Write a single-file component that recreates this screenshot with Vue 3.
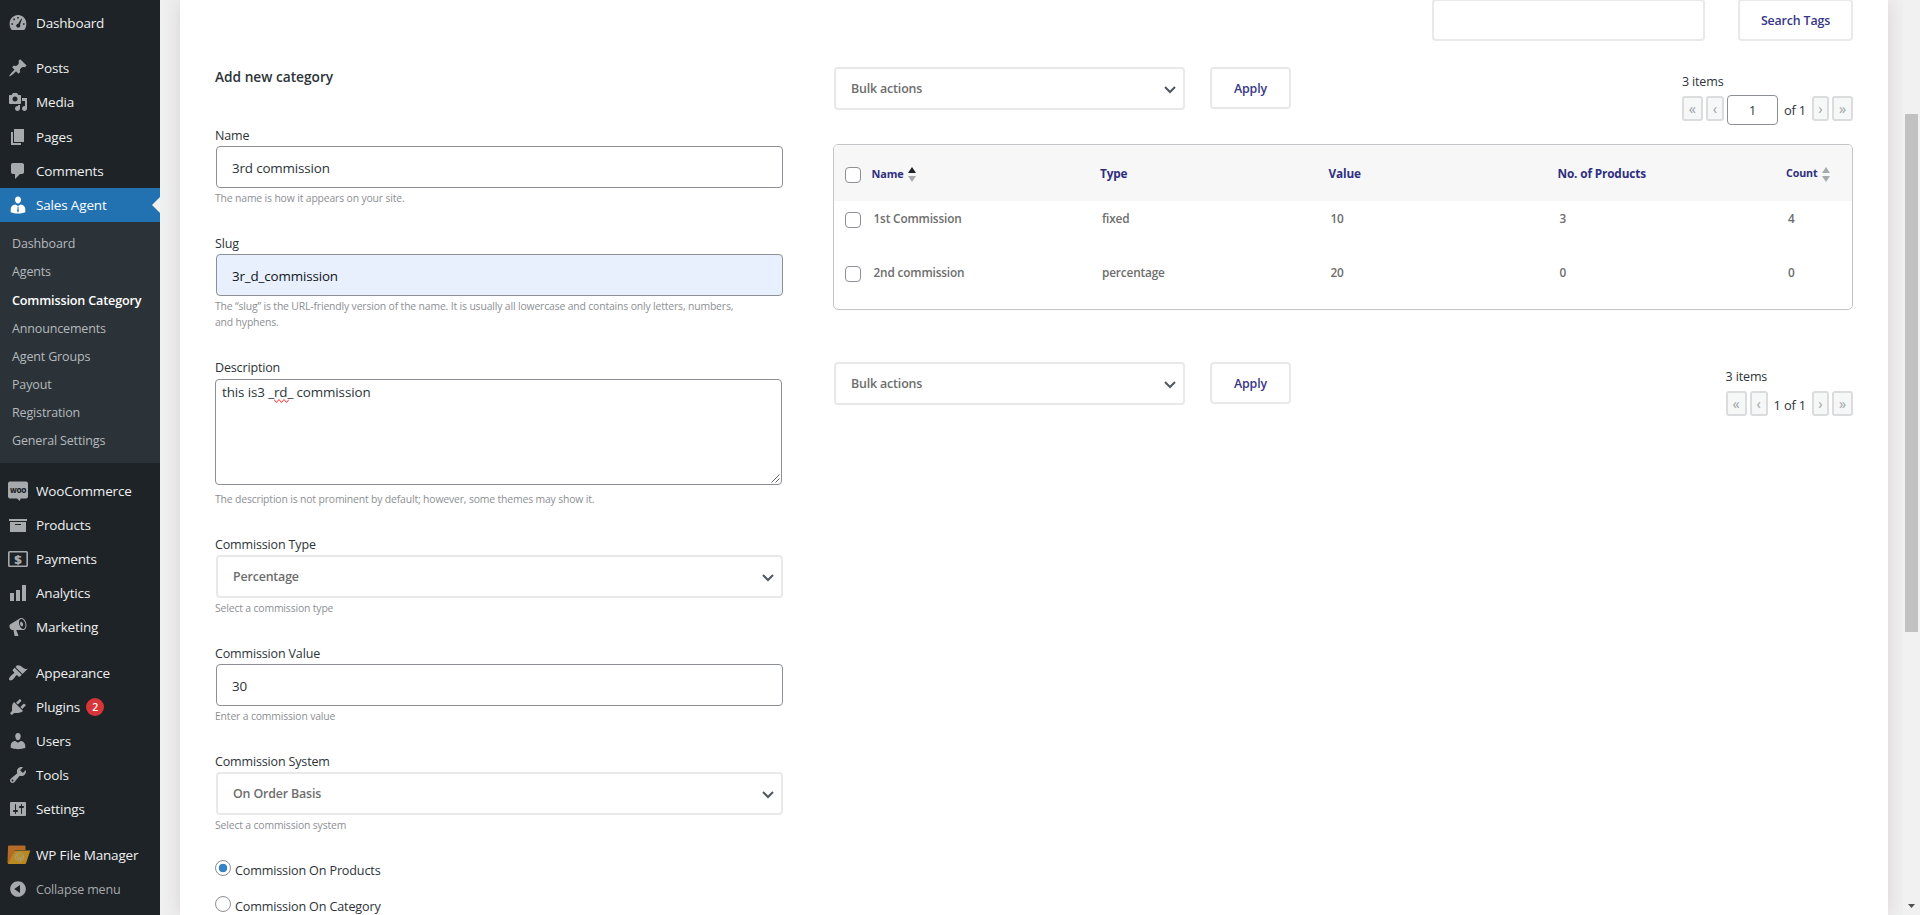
<script setup>
const paths = {
  dashboard: 'M3.76 17h12.48c1.34-1.63 2.14-3.71 2.14-6 0-5.3-3.75-9-8.38-9s-8.38 3.7-8.38 9c0 2.29.8 4.37 2.14 6zM9.200 4h1.600v1.600H9.200zM5.300 5.600h1.600v1.600H5.300zM13.300 5.600l.7.400-2 5.700c.4.800.3 1.700-.2 2.300-.8.800-2.200.800-3 .1s-.8-2 .1-2.800c.4-.4.9-.5 1.300-.5zM3.400 10.200H5v1.600H3.400zM15 10.200h1.600v1.600H15z',
  post: 'M10.44 3.02l1.82-1.82 6.36 6.35-1.83 1.82c-1.05-.68-2.48-.57-3.41.36l-.75.75c-.92.93-1.04 2.35-.35 3.41l-1.83 1.82-2.41-2.41-2.8 2.79c-.42.42-3.38 2.71-3.8 2.29s1.86-3.39 2.28-3.81l2.79-2.79L4.1 9.36l1.83-1.82c1.05.69 2.48.57 3.4-.36l.75-.75c.93-.92 1.05-2.35.36-3.41z',
  media: 'M13 11V4c0-.55-.45-1-1-1h-1.67L9 1H5L3.67 3H2c-.55 0-1 .45-1 1v7c0 .55.45 1 1 1h10c.55 0 1-.45 1-1zM7 4.5c1.38 0 2.5 1.12 2.5 2.5S8.38 9.5 7 9.5 4.5 8.38 4.5 7 5.62 4.5 7 4.5zM14 6h5v10.5c0 1.38-1.12 2.5-2.5 2.5S14 17.88 14 16.5s1.12-2.5 2.5-2.5c.17 0 .34.02.5.05V9h-3V6zm-4 8.05V13h2v3.5c0 1.38-1.12 2.5-2.5 2.5S7 17.88 7 16.5 8.12 14 9.5 14c.17 0 .34.02.5.05z',
  page: 'M6 15V2h10v13H6zm-1 1h8v2H3V5h2v11z',
  comment: 'M5 2h9c1.1 0 2 .9 2 2v7c0 1.1-.9 2-2 2h-2l-5 5v-5H5c-1.1 0-2-.9-2-2V4c0-1.1.9-2 2-2z',
  agent: 'M10 1.500c1.900 0 3 1.400 3 3.300S11.700 8.600 10 8.600 7 6.700 7 4.800s1.100-3.300 3-3.300zM7.200 9.500L10 11l2.800-1.500c2.600.4 4.500 2.200 4.500 4.800v2.900c-2.200.8-4.700 1.300-7.300 1.300s-5.100-.5-7.300-1.300v-2.900c0-2.600 1.900-4.400 4.500-4.800zM9.200 11.800l.4 1-.5 3.200.9 1.500.9-1.500-.5-3.200.4-1z',
  archive: 'M19 4v2H1V4h18zM2 7h16v10H2V7zm11 3V9H7v1h6z',
  chart: 'M18 18V2h-4v16h4zm-6 0V7H8v11h4zm-6 0v-8H2v8h4z',
  megaphone: 'M18.15 5.94c.46 1.62.38 3.22-.02 4.48-.42 1.28-1.26 2.18-2.3 2.48-.16.06-.26.06-.4.06-.06.02-.12.02-.18.02-.06.02-.14.02-.22.02h-6.8l2.22 5.5c.02.14-.06.26-.14.34-.08.1-.24.16-.34.16H6.95c-.1 0-.26-.06-.34-.16-.08-.08-.16-.2-.14-.34l-1-5.5H4.25l-.02-.02c-.5.06-1.08-.18-1.54-.62s-.88-1.08-1.06-1.88c-.24-.8-.2-1.56-.02-2.2.18-.62.58-1.08 1.06-1.3l.02-.02 9-5.4c.1-.06.18-.1.24-.16.06-.04.14-.08.24-.12.16-.08.28-.12.5-.18 1.04-.3 2.24.1 3.22.98s1.84 2.24 2.26 3.86zm-2.58 5.98h-.02c.4-.1.74-.34 1.04-.7.58-.7.86-1.76.86-3.04 0-.64-.1-1.3-.28-1.98-.34-1.36-1.02-2.5-1.78-3.24s-1.68-1.1-2.46-.88c-.82.22-1.4.96-1.7 2-.32 1.04-.28 2.36.06 3.72.38 1.36 1 2.5 1.8 3.24.78.74 1.62 1.1 2.48.88zm-2.54-7.08c.22-.04.42-.02.62.04.38.16.76.48 1.02 1s.42 1.2.42 1.78c0 .3-.04.56-.12.8-.18.48-.44.84-.86.94-.34.1-.8-.06-1.14-.4s-.64-.86-.78-1.5c-.18-.62-.12-1.24.02-1.72s.48-.84.82-.94z',
  brush: 'M14.48 11.06L7.41 3.99l1.5-1.5c.5-.56 2.3-.47 3.51.32 1.21.8 1.43 1.28 2.91 2.1 1.18.64 2.45 1.26 4.45.85zm-.71.71L6.7 4.7 4.93 6.47c-.39.39-.39 1.02 0 1.41l1.06 1.06c.39.39.39 1.03 0 1.42-.6.6-1.43 1.11-2.21 1.69-.35.26-.7.53-1.01.84C1.43 14.23.4 16.08 1.4 17.07c.99 1 2.84-.03 4.18-1.36.31-.31.58-.66.85-1.02.57-.78 1.08-1.61 1.69-2.21.39-.39 1.02-.39 1.41 0l1.06 1.06c.39.39 1.02.39 1.41 0z',
  plug: 'M13.11 4.36L9.87 7.6 8 5.73l3.24-3.24c.35-.34 1.05-.2 1.56.32.52.51.66 1.21.31 1.55zm-8 1.77l.91-1.12 9.01 9.01-1.19.84c-.71.71-2.63 1.16-3.82 1.16H6.14L4.9 17.26c-.59.59-1.54.59-2.12 0-.59-.58-.59-1.53 0-2.12l1.24-1.24v-3.88c0-1.13.4-3.19 1.09-3.89zm7.26 3.97l3.24-3.24c.34-.35 1.04-.21 1.55.31.52.51.66 1.21.31 1.55l-3.24 3.25z',
  user: 'M10 9.25c-2.27 0-2.73-3.44-2.73-3.44C7 4.02 7.82 2 9.97 2c2.16 0 2.98 2.02 2.71 3.81 0 0-.41 3.44-2.68 3.44zm0 2.57L12.72 10c2.39 0 4.52 2.33 4.52 4.53v2.49s-3.65 1.13-7.24 1.13c-3.65 0-7.24-1.13-7.24-1.13v-2.49c0-2.25 1.94-4.48 4.47-4.48z',
  wrench: 'M16.68 9.77c-1.34 1.34-3.3 1.67-4.95.99l-5.41 6.52c-.99.99-2.59.99-3.58 0s-.99-2.59 0-3.57l6.52-5.42c-.68-1.65-.35-3.61.99-4.95 1.28-1.28 3.12-1.62 4.72-1.06l-2.89 2.89 2.82 2.82 2.86-2.87c.53 1.58.18 3.39-1.08 4.65zM3.81 16.21c.4.39 1.04.39 1.43 0 .4-.4.4-1.04 0-1.43-.39-.4-1.03-.4-1.43 0-.39.39-.39 1.03 0 1.43z',
  sliders: 'M18 16V4c0-.55-.45-1-1-1H3c-.55 0-1 .45-1 1v12c0 .55.45 1 1 1h14c.55 0 1-.45 1-1zM8 11h1c.55 0 1 .45 1 1s-.45 1-1 1H8v1.500c0 .28-.22.5-.5.5s-.5-.22-.5-.5V13H6c-.55 0-1-.45-1-1s.45-1 1-1h1V5.500c0-.28.22-.5.5-.5s.5.22.5.5V11zm5-2h-1c-.55 0-1-.45-1-1s.45-1 1-1h1V5.500c0-.28.22-.5.5-.5s.5.22.5.5V7h1c.55 0 1 .45 1 1s-.45 1-1 1h-1v5.500c0 .28-.22.5-.5.5s-.5-.22-.5-.5V9z',
  collapse: 'M10 2.160c4.330 0 7.840 3.510 7.840 7.840s-3.510 7.840-7.840 7.840S2.160 14.330 2.160 10 5.710 2.160 10 2.160zm2 11.720V6.120L6.180 9.970z',
}

const groups = [
  { id: 'home', items: [{ label: 'Dashboard', icon: 'dashboard' }] },
  {
    id: 'content',
    items: [
      { label: 'Posts', icon: 'post' },
      { label: 'Media', icon: 'media' },
      { label: 'Pages', icon: 'page' },
      { label: 'Comments', icon: 'comment' },
      {
        label: 'Sales Agent',
        icon: 'agent',
        active: true,
        children: ['Dashboard', 'Agents', 'Commission Category', 'Announcements', 'Agent Groups', 'Payout', 'Registration', 'General Settings'],
      },
    ],
  },
  {
    id: 'shop',
    items: [
      { label: 'WooCommerce', icon: 'woo' },
      { label: 'Products', icon: 'archive' },
      { label: 'Payments', icon: 'money' },
      { label: 'Analytics', icon: 'chart' },
      { label: 'Marketing', icon: 'megaphone' },
    ],
  },
  {
    id: 'admin',
    items: [
      { label: 'Appearance', icon: 'brush' },
      { label: 'Plugins', icon: 'plug', badge: 2 },
      { label: 'Users', icon: 'user' },
      { label: 'Tools', icon: 'wrench' },
      { label: 'Settings', icon: 'sliders' },
    ],
  },
  {
    id: 'extra',
    items: [
      { label: 'WP File Manager', icon: 'files' },
      { label: 'Collapse menu', icon: 'collapse', muted: true },
    ],
  },
]

const rows = [
  { name: '1st Commission', type: 'fixed', value: 10, products: 3, count: 4 },
  { name: '2nd commission', type: 'percentage', value: 20, products: 0, count: 0 },
]
</script>

<template>
  <div class="page">
    <nav class="sidebar">
      <div v-for="g in groups" :key="g.id" :class="['group', g.id]">
        <template v-for="item in g.items" :key="item.label">
          <a :class="['item', { active: item.active, muted: item.muted }]">
            <svg v-if="item.icon === 'woo'" class="icon" viewBox="0 0 20 20">
              <path d="M2 .5h16a2 2 0 0 1 2 2v13a2 2 0 0 1-2 2h-5.500l-.7 2.500-2.800-2.500H2a2 2 0 0 1-2-2v-13a2 2 0 0 1 2-2z" />
              <text class="woo" x="10" y="11.600" text-anchor="middle">WOO</text>
            </svg>
            <svg v-else-if="item.icon === 'money'" class="icon" viewBox="0 0 20 20">
              <rect class="line" x=".8" y="2.800" width="18.400" height="14.400" rx=".8" />
              <text class="dollar" x="10" y="14.500" text-anchor="middle">$</text>
            </svg>
            <svg v-else-if="item.icon === 'files'" class="icon files" viewBox="0 0 24 20">
              <path class="folder-back" d="M1 1.500a1 1 0 0 1 1-1h15.500a1 1 0 0 1 1 1V5H8L3 19H1.500L.5 18z" />
              <path class="folder-front" d="M7.800 5.500h15.500L19 18.300a1.200 1.200 0 0 1-1 .7H1z" />
              <circle class="ring" cx="12.500" cy="12" r="4.200" />
              <path class="mark" d="M9.800 10.200l1.700 4.800 1.200-3.400 1.200 3.400 1.700-4.800M9.300 10h2M12 10h2" />
            </svg>
            <svg v-else class="icon" viewBox="0 0 20 20">
              <path fill-rule="evenodd" :d="paths[item.icon]" />
            </svg>
            <span>{{ item.label }}</span>
            <b v-if="item.badge" class="badge">{{ item.badge }}</b>
          </a>
          <ul v-if="item.children" class="submenu">
            <li v-for="c in item.children" :key="c" :class="{ current: c === 'Commission Category' }">{{ c }}</li>
          </ul>
        </template>
      </div>
    </nav>

    <main class="panel">
      <section class="form">
        <h2>Add new category</h2>
        <div class="field">
          <label>Name</label>
          <div class="input">3rd commission</div>
          <p>The name is how it appears on your site.</p>
        </div>
        <div class="field">
          <label>Slug</label>
          <div class="input filled">3r_d_commission</div>
          <p>The “slug” is the URL-friendly version of the name. It is usually all lowercase and contains only letters, numbers,<br />and hyphens.</p>
        </div>
        <div class="field desc">
          <label>Description</label>
          <div class="textarea">
            this is3 _<span class="typo">rd<svg class="squiggle" viewBox="0 0 15 4"><path d="M0 .5l2.500 3 2.500-3 2.500 3 2.500-3 2.500 3 2.500-3" /></svg></span>_ commission
            <svg class="grip" viewBox="0 0 9 9"><path d="M.5 8.500l8-8M4.500 8.500l4-4" /></svg>
          </div>
          <p>The description is not prominent by default; however, some themes may show it.</p>
        </div>
        <div class="field">
          <label>Commission Type</label>
          <div class="select">
            <span>Percentage</span>
            <svg class="chevron" viewBox="0 0 12 8"><path d="M1 1l5 5 5-5" /></svg>
          </div>
          <p>Select a commission type</p>
        </div>
        <div class="field">
          <label>Commission Value</label>
          <div class="input">30</div>
          <p>Enter a commission value</p>
        </div>
        <div class="field">
          <label>Commission System</label>
          <div class="select">
            <span>On Order Basis</span>
            <svg class="chevron" viewBox="0 0 12 8"><path d="M1 1l5 5 5-5" /></svg>
          </div>
          <p>Select a commission system</p>
        </div>
        <div class="radio-row"><i class="radio on"></i><span>Commission On Products</span></div>
        <div class="radio-row"><i class="radio"></i><span>Commission On Category</span></div>
      </section>

      <section class="list">
        <div class="search">
          <div class="search-input"></div>
          <button class="btn wide">Search Tags</button>
        </div>

        <div class="tablenav">
          <div class="select bulk">
            <span>Bulk actions</span>
            <svg class="chevron" viewBox="0 0 12 8"><path d="M1 1l5 5 5-5" /></svg>
          </div>
          <button class="btn">Apply</button>
          <div class="pages">
            <div class="count">3 items</div>
            <div class="pager">
              <i class="pg">«</i><i class="pg slim">‹</i>
              <div class="pg-input">1</div>
              <span class="of">of 1</span>
              <i class="pg slim next">›</i><i class="pg">»</i>
            </div>
          </div>
        </div>

        <div class="table">
          <div class="tr head">
            <i class="check"></i>
            <span class="sortable">Name
              <svg class="sort asc" viewBox="0 0 8 15"><path d="M0 6l4-6 4 6z" /><path d="M0 9h8l-4 6z" /></svg>
            </span>
            <span>Type</span><span>Value</span><span>No. of Products</span>
            <span class="sortable">Count
              <svg class="sort" viewBox="0 0 8 15"><path d="M0 6l4-6 4 6z" /><path d="M0 9h8l-4 6z" /></svg>
            </span>
          </div>
          <div v-for="r in rows" :key="r.name" class="tr">
            <i class="check"></i>
            <span>{{ r.name }}</span><span>{{ r.type }}</span><span>{{ r.value }}</span><span>{{ r.products }}</span><span>{{ r.count }}</span>
          </div>
        </div>

        <div class="tablenav bottom">
          <div class="select bulk">
            <span>Bulk actions</span>
            <svg class="chevron" viewBox="0 0 12 8"><path d="M1 1l5 5 5-5" /></svg>
          </div>
          <button class="btn">Apply</button>
          <div class="pages">
            <div class="count">3 items</div>
            <div class="pager">
              <i class="pg">«</i><i class="pg slim">‹</i>
              <span class="of">1 of 1</span>
              <i class="pg slim next">›</i><i class="pg">»</i>
            </div>
          </div>
        </div>
      </section>
    </main>

    <div class="scrollbar">
      <div class="thumb"></div>
      <svg class="arrow" viewBox="0 0 7 4"><path d="M0 0h7L3.500 4z" /></svg>
    </div>
  </div>
</template>

<style>
body {
  margin: 0;
  overflow: hidden;
}
</style>

<style scoped>
* {
  box-sizing: border-box;
}
.page {
  display: flex;
  width: 1920px;
  height: 915px;
  overflow: hidden;
  background: #f0f0f1;
  color: #2c3338;
  font-family: "Open Sans", "Noto Sans", sans-serif;
  font-size: 12.500px;
  letter-spacing: -0.012em;
}

/* Sidebar */
.sidebar {
  flex: none;
  position: relative;
  z-index: 1;
  width: 160px;
  padding-top: 6px;
  background: #1d2327;
}
.group {
  margin-bottom: 12px;
}
.group.home,
.group.content {
  margin-bottom: 11px;
}
.item {
  display: flex;
  align-items: center;
  position: relative;
  height: 34px;
  padding-left: 8px;
  color: #f0f0f1;
  font-size: 13.500px;
  letter-spacing: -0.012em;
}
.content .item {
  height: 34.250px;
}
.icon {
  flex: none;
  width: 20px;
  height: 20px;
  margin-right: 8px;
  fill: #a7aaad;
  overflow: visible;
}
.item.active {
  background: #2271b1;
  color: #fff;
}
.item.active .icon {
  fill: #fff;
}
.item.active::after {
  content: "";
  position: absolute;
  top: 9px;
  right: 0;
  border: 8px solid transparent;
  border-left: 0;
  border-right-color: #f0f0f1;
}
.item.muted {
  color: #a7aaad;
  font-size: 12.500px;
}
.woo {
  fill: #1d2327;
  font-size: 6.500px;
  font-weight: 800;
  letter-spacing: -0.4px;
}
.line {
  fill: none;
  stroke: #a7aaad;
  stroke-width: 1.600;
}
.dollar {
  font-size: 13px;
  font-weight: 800;
  letter-spacing: 0;
}
.files {
  width: 24px;
  margin-left: -1px;
  margin-right: 5px;
}
.folder-back {
  fill: #b56a28;
}
.folder-front {
  fill: #b98a22;
}
.ring,
.mark {
  fill: none;
  stroke: #a9a07c;
  stroke-width: 0.900;
}
.badge {
  display: flex;
  align-items: center;
  justify-content: center;
  width: 18px;
  height: 18px;
  margin-left: 6px;
  border-radius: 9px;
  background: #d63638;
  color: #fff;
  font-size: 10.500px;
  font-weight: 600;
}
.submenu {
  height: 241px;
  margin: 0;
  padding: 8px 0 0 12px;
  background: #2c3338;
  color: #b4b9be;
  list-style: none;
}
.submenu li {
  height: 28.100px;
  line-height: 28px;
}
.submenu .current {
  color: #fff;
  font-size: 12.600px;
  font-weight: 600;
  line-height: 29px;
}

/* Panel */
.panel {
  display: flex;
  flex: none;
  width: 1708px;
  margin-left: 20px;
  padding-left: 35px;
  background: #fff;
  box-shadow: 0 0 18px #d8d0d0;
}
.form {
  flex: none;
  width: 568px;
}
h2 {
  height: 20px;
  margin: 67px 0 39px;
  font-size: 13.700px;
  font-weight: 600;
  letter-spacing: 0;
  line-height: 20px;
}
.field {
  margin-bottom: 28px;
}
.field label {
  display: block;
  height: 20px;
  line-height: 19px;
}
.field p {
  margin: 2px 0 0;
  color: #8c8f94;
  font-size: 10.400px;
  line-height: 16px;
  white-space: nowrap;
}
.input {
  display: flex;
  align-items: center;
  height: 42px;
  margin-left: 1px;
  padding: 2px 0 0 15px;
  border: 1px solid #8c8f94;
  border-radius: 4px;
  font-size: 13.400px;
}
.filled {
  background: #e8f0fe;
  color: #101418;
}
.select {
  display: flex;
  align-items: center;
  justify-content: space-between;
  height: 43px;
  margin-left: 1px;
  padding: 0 7px 0 15px;
  border: 2px solid #e9e9e9;
  border-radius: 4px;
  color: #6d6d6d;
  font-size: 12.400px;
  font-weight: 600;
}
.chevron {
  width: 12px;
  height: 8px;
  margin-top: 3px;
  fill: none;
  stroke: #50575e;
  stroke-width: 2;
}
.desc label {
  height: 21px;
}
.textarea {
  position: relative;
  width: 567px;
  height: 106px;
  padding: 2px 6px;
  border: 1px solid #8c8f94;
  border-radius: 4px;
  font-size: 13.400px;
  letter-spacing: -0.008em;
  line-height: 20px;
}
.typo {
  position: relative;
}
.squiggle {
  position: absolute;
  left: 0;
  bottom: -2px;
  width: 15px;
  height: 4px;
  fill: none;
  stroke: #f33;
}
.grip {
  position: absolute;
  right: 1px;
  bottom: 1px;
  width: 9px;
  height: 9px;
  fill: none;
  stroke: #555;
  stroke-width: 0.900;
}
.desc p {
  margin-top: 6px;
}
.radio-row {
  display: flex;
  height: 36px;
  gap: 4px;
  font-size: 12.600px;
  line-height: 21px;
}
.radio-row:nth-last-child(2) {
  margin-top: -1px;
}
.radio {
  flex: none;
  width: 16px;
  height: 16px;
  border: 1px solid #8c8f94;
  border-radius: 50%;
}
.radio.on {
  background: radial-gradient(circle, #3582c4 4px, #fff 4.600px);
}

/* List */
.list {
  width: 1020px;
  margin-left: 50px;
}
.search {
  display: flex;
  justify-content: flex-end;
  gap: 33px;
  height: 68px;
  margin-top: -1px;
}
.search-input {
  width: 273px;
  height: 42px;
  border: 2px solid #e9e9e9;
  border-radius: 4px;
}
.btn {
  width: 81px;
  height: 42px;
  margin-left: 25px;
  padding: 0;
  border: 2px solid #e9e9e9;
  border-radius: 4px;
  background: #fff;
  color: #373787;
  font: 550 12.400px "Open Sans", "Noto Sans", sans-serif;
  letter-spacing: -0.012em;
}
.btn.wide {
  width: 115px;
  margin: 0;
}
.tablenav {
  display: flex;
  height: 77px;
}
.bulk {
  width: 351px;
}
.pages {
  margin-left: auto;
  padding-top: 5px;
}
.count {
  line-height: 20px;
}
.pager {
  display: flex;
  align-items: center;
  height: 30px;
  margin-top: 3px;
}
.pg {
  width: 21px;
  height: 25px;
  margin: -4px 3px 0 0;
  border: 2px solid #dcdcde;
  border-radius: 3px;
  background: #f6f7f7;
  color: #a0a3a7;
  font-size: 14.500px;
  font-style: normal;
  letter-spacing: 0;
  line-height: 22px;
  text-align: center;
}
.pg:last-child {
  margin-right: 0;
}
.slim {
  width: 18px;
}
.next {
  width: 17px;
}
.pg-input {
  width: 51px;
  height: 30px;
  border: 1px solid #8c8f94;
  border-radius: 4px;
  line-height: 29px;
  text-align: center;
}
.of {
  margin: 0 6px;
  font-size: 12.800px;
}
.bottom .of {
  margin: 0 6px 0 3px;
}
.table {
  height: 166px;
  border: 1px solid #c3c4c7;
  border-radius: 5px;
  overflow: hidden;
}
.tr {
  display: grid;
  grid-template-columns: 39.500px 228.500px 228.500px 229px 228.500px 1fr;
  height: 54px;
  padding-top: 9px;
  color: #6d6d6d;
  font-size: 11.800px;
  font-weight: 600;
  line-height: 17px;
}
.check {
  width: 16px;
  height: 16px;
  margin: 2px 0 0 11px;
  border: 1px solid #8c8f94;
  border-radius: 4px;
  background: #fff;
}
.head {
  height: 56px;
  padding-top: 19px;
  background: #f7f7f7;
  color: #2f2f80;
  font-size: 11.800px;
  font-weight: 700;
  line-height: 19px;
}
.head > span {
  margin-left: -2px;
}
.head .check {
  margin-top: 3px;
}
.sortable {
  display: flex;
  gap: 5px;
  font-size: 10.900px;
}
.sort {
  width: 8px;
  height: 15px;
  margin-top: 3px;
  fill: #a7aaad;
}
.sortable:last-child {
  font-size: 10.700px;
}
.asc path:first-child {
  fill: #1d2327;
}
.tablenav.bottom {
  margin-top: 52px;
}

/* Scrollbar */
.scrollbar {
  position: relative;
  z-index: 1;
  width: 17px;
  margin-left: auto;
  padding: 114px 2px 0;
  background: #f1f1f1;
}
.thumb {
  height: 518px;
  background: #c1c1c1;
}
.arrow {
  position: absolute;
  left: 5px;
  bottom: 7px;
  width: 7px;
  height: 4px;
  fill: #505050;
}
</style>
